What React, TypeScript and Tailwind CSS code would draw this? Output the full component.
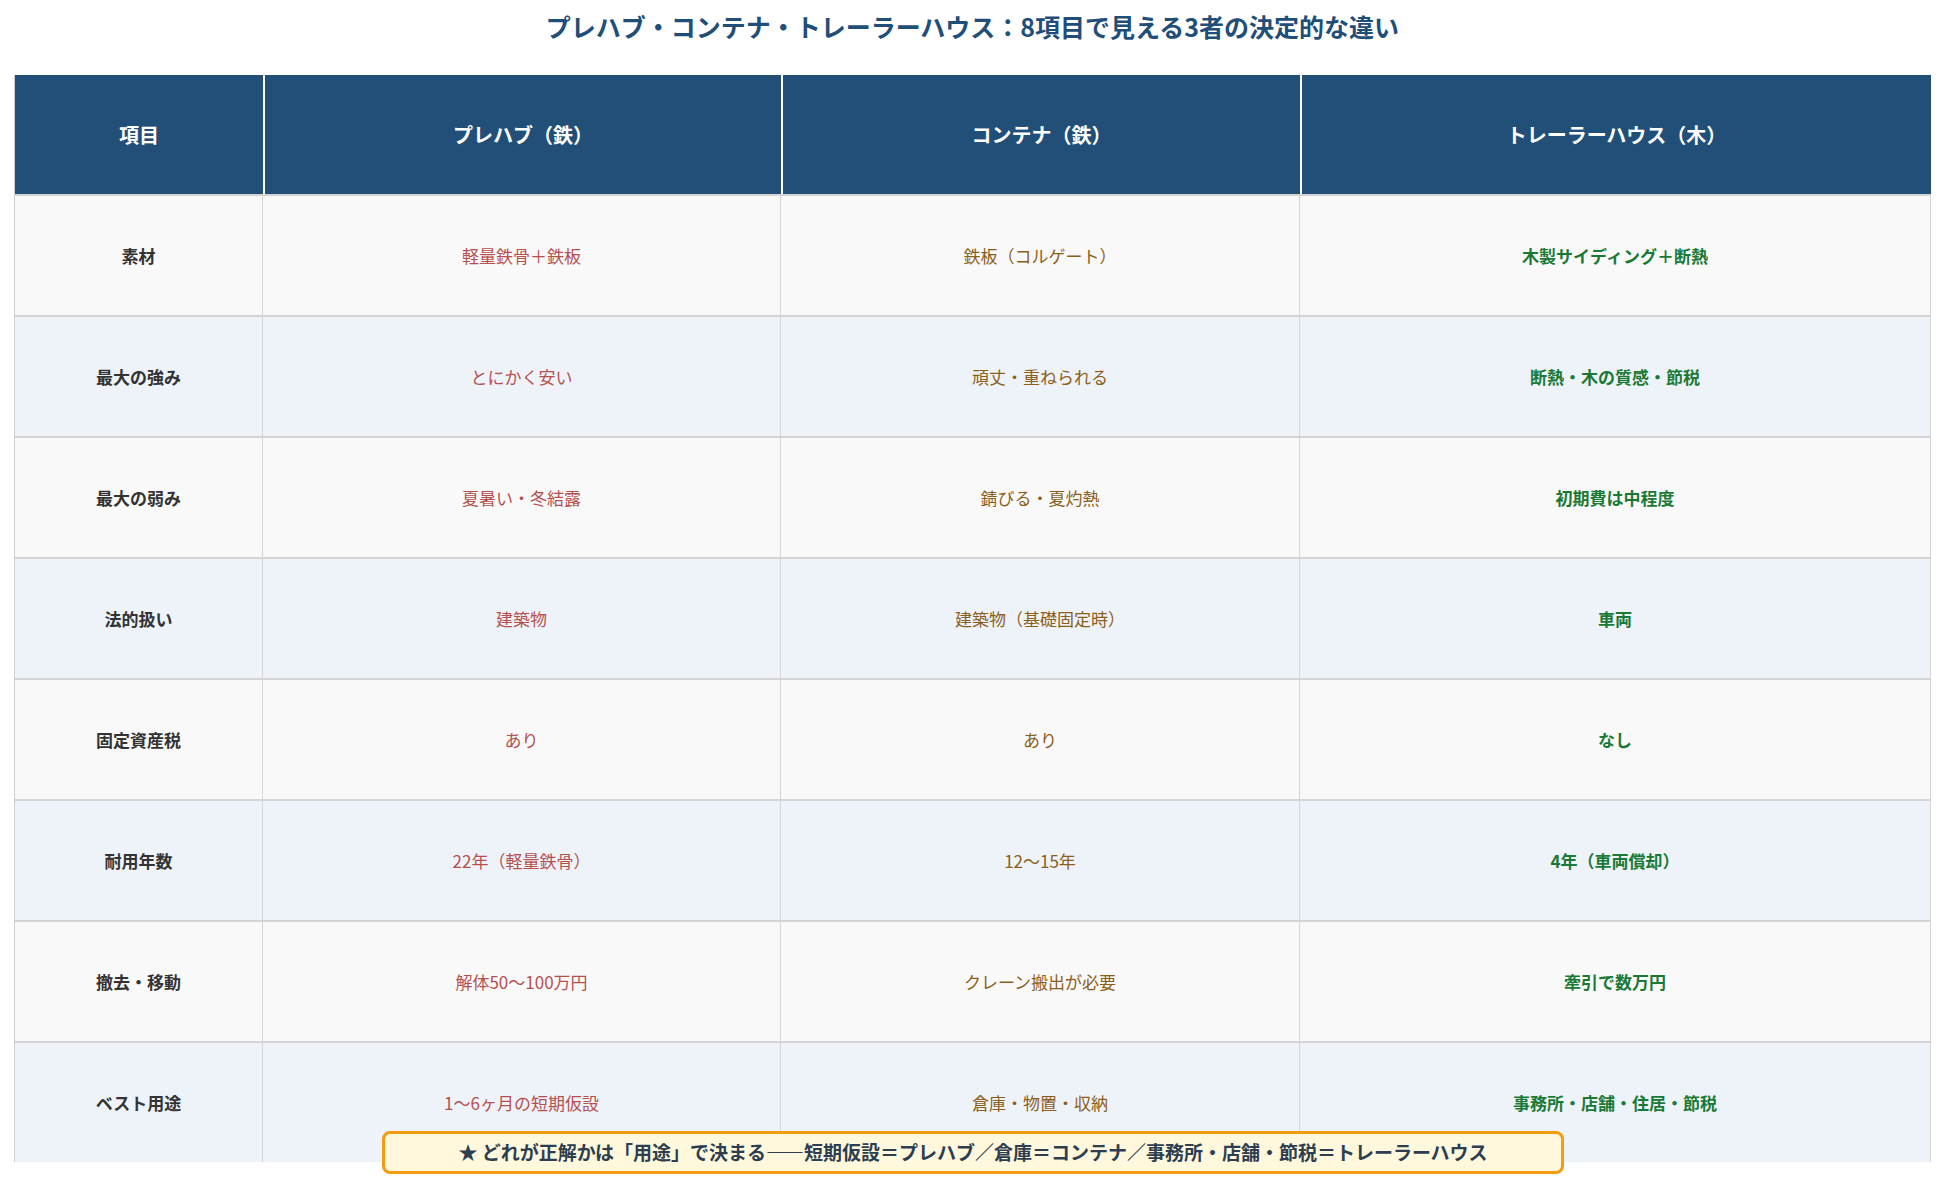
const rows: [string, string, string, string][] = [
  ['素材', '軽量鉄骨＋鉄板', '鉄板（コルゲート）', '木製サイディング＋断熱'],
  ['最大の強み', 'とにかく安い', '頑丈・重ねられる', '断熱・木の質感・節税'],
  ['最大の弱み', '夏暑い・冬結露', '錆びる・夏灼熱', '初期費は中程度'],
  ['法的扱い', '建築物', '建築物（基礎固定時）', '車両'],
  ['固定資産税', 'あり', 'あり', 'なし'],
  ['耐用年数', '22年（軽量鉄骨）', '12〜15年', '4年（車両償却）'],
  ['撤去・移動', '解体50〜100万円', 'クレーン搬出が必要', '牽引で数万円'],
  ['ベスト用途', '1〜6ヶ月の短期仮設', '倉庫・物置・収納', '事務所・店舗・住居・節税'],
];

export default function App() {
  return (
    <div
      className="relative w-[1945px] h-[1177px] bg-white"
      style={{ fontFamily: '"Noto Sans CJK JP", "Noto Sans", sans-serif' }}
    >
      <h1 className="h-[75px] pt-[8px] text-center text-[25px] font-bold text-[#1f4e79]">
        プレハブ・コンテナ・トレーラーハウス：8項目で見える3者の決定的な違い
      </h1>
      <div className="mx-[14px] grid grid-cols-[248px_518px_519px_1fr] border-l border-[#d0d0d0]">
        {['項目', 'プレハブ（鉄）', 'コンテナ（鉄）', 'トレーラーハウス（木）'].map((h, i) => (
          <div
            key={h}
            className={`h-[119px] flex items-center justify-center bg-[#214f78] text-white text-[20px] font-bold ${i > 0 ? 'border-l-2 border-white' : ''}`}
          >
            {h}
          </div>
        ))}
        {rows.map((r, ri) => {
          const bg = ri % 2 === 0 ? 'bg-[#f9f9f9]' : 'bg-[#eef3fa]';
          return r.map((c, ci) => (
            <div
              key={`${ri}-${ci}`}
              className={`h-[121px] flex items-center justify-center text-[17px] border-t-2 border-[#d4d4d4] border-r border-r-[#d4d4d4] ${bg} ${
                ci === 0
                  ? 'font-bold text-[#333]'
                  : ci === 1
                    ? 'text-[#b5504f]'
                    : ci === 2
                      ? 'text-[#8b5e1a]'
                      : 'font-bold text-[#1a7a35]'
              }`}
            >
              {c}
            </div>
          ));
        })}
      </div>
      <div className="absolute left-[382px] top-[1131px] w-[1182px] h-[43px] flex items-center justify-center rounded-lg border-[3px] border-[#f39c12] bg-[#fff8dc] text-[19px] font-bold text-[#2c3e50]">
        ★ どれが正解かは「用途」で決まる――短期仮設＝プレハブ／倉庫＝コンテナ／事務所・店舗・節税＝トレーラーハウス
      </div>
    </div>
  );
}
